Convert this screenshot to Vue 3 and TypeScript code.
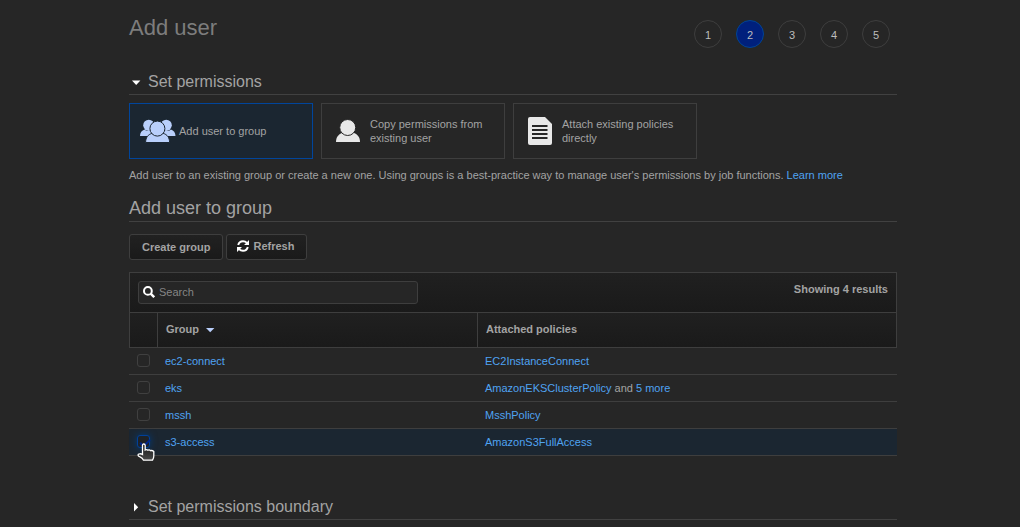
<script setup lang="ts">
import { ref } from 'vue'

interface Policy {
  name: string
  more?: string
}
interface Group {
  name: string
  policy: Policy
}

const steps: number[] = [1, 2, 3, 4, 5]
const currentStep = 2

const methods = [
  { id: 'group', label: 'Add user to group' },
  { id: 'copy', label: 'Copy permissions from existing user' },
  { id: 'attach', label: 'Attach existing policies directly' },
]
const method = ref('group')

const groups: Group[] = [
  { name: 'ec2-connect', policy: { name: 'EC2InstanceConnect' } },
  { name: 'eks', policy: { name: 'AmazonEKSClusterPolicy', more: '5 more' } },
  { name: 'mssh', policy: { name: 'MsshPolicy' } },
  { name: 's3-access', policy: { name: 'AmazonS3FullAccess' } },
]
const selected = ref<string[]>(['s3-access'])
const search = ref('')
</script>

<template>
  <main class="page">
    <header class="top">
      <h1>Add user</h1>
      <ol class="steps">
        <li v-for="n in steps" :key="n" :class="{ current: n === currentStep }">{{ n }}</li>
      </ol>
    </header>

    <h2 class="section">
      <button type="button" aria-expanded="true">
        <svg width="12" height="12" viewBox="0 0 12 12"><path d="M2 4.5h8.400L6.200 9z" fill="#fff" /></svg>
        Set permissions
      </button>
    </h2>

    <div class="methods">
      <button
        v-for="m in methods"
        :key="m.id"
        type="button"
        class="method"
        :class="[m.id, { active: method === m.id }]"
        :aria-pressed="method === m.id"
        @click="method = m.id"
      >
        <svg v-if="m.id === 'group'" width="36" height="24" viewBox="0 0 36 24">
          <g fill="#b9cffb">
            <circle cx="8.800" cy="6.300" r="5.600" />
            <circle cx="26.200" cy="6.300" r="5.600" />
            <path d="M0 17c0-3.500 1.800-5.700 4.600-6.600 2 2 5.400 2.300 7.400.6L15 17z" />
            <path d="M35.500 17c0-3.500-1.800-5.700-4.600-6.600-2 2-5.400 2.300-7.400.6L20.500 17z" />
          </g>
          <g fill="#b9cffb" stroke="#1b2631" stroke-width="1">
            <path d="M5.600 23.500c0-5 2.500-8 6.500-9.200h11c4 1.200 6.500 4.200 6.500 9.200z" />
            <circle cx="17.400" cy="9.600" r="7.500" />
          </g>
        </svg>
        <svg v-else-if="m.id === 'copy'" width="24" height="24" viewBox="0 0 24 24">
          <path d="M0 23c0-5 2.500-7.500 6-9h12c3.500 1.500 6 4 6 9z" fill="#e8e8e8" />
          <circle cx="11.700" cy="8.500" r="8" fill="#e8e8e8" stroke="#262626" stroke-width="1" />
        </svg>
        <svg v-else width="24" height="28" viewBox="0 0 24 28">
          <path d="M2 0h15l7 7v19q0 2-2 2H2q-2 0-2-2V2q0-2 2-2z" fill="#e8e8e8" />
          <path d="M4 9h15.500M4 13h15.500M4 17h15.500M4 21h15.500" stroke="#262626" stroke-width="2" />
        </svg>
        <span>{{ m.label }}</span>
      </button>
    </div>

    <p class="hint">
      Add user to an existing group or create a new one. Using groups is a best-practice way to manage user's
      permissions by job functions. <a href="#">Learn more</a>
    </p>

    <h3>Add user to group</h3>

    <div class="actions">
      <button type="button">Create group</button>
      <button type="button" class="refresh">
        <svg width="12" height="12" viewBox="0 0 12 12" fill="none" stroke="#fff" stroke-width="1.900">
          <path d="M1.200 5C1.800 2.600 3.700 1.200 6 1.200c1.600 0 2.900.6 3.900 1.700M10.800 7c-.6 2.400-2.500 3.800-4.800 3.800-1.600 0-2.900-.6-3.900-1.700" />
          <path d="M12 0v5H7zM0 12V7h5z" fill="#fff" stroke="none" />
        </svg>
        Refresh
      </button>
    </div>

    <div class="toolbar">
      <label class="search">
        <svg width="12" height="12" viewBox="0 0 12 12" fill="none" stroke="#fff">
          <circle cx="4.900" cy="4.900" r="3.900" stroke-width="2" />
          <path d="M7.700 7.700l3.500 3.500" stroke-width="2.400" />
        </svg>
        <input v-model="search" type="text" placeholder="Search" aria-label="Search" />
      </label>
      <strong>Showing 4 results</strong>
    </div>

    <table>
      <colgroup>
        <col class="col-check" />
        <col class="col-group" />
        <col />
      </colgroup>
      <thead>
        <tr>
          <th></th>
          <th>
            Group
            <svg width="10" height="6" viewBox="0 0 10 6"><path d="M1 1h8.400L5.200 5.200z" fill="#b9cffb" /></svg>
          </th>
          <th>Attached policies</th>
        </tr>
      </thead>
      <tbody>
        <tr v-for="g in groups" :key="g.name" :class="{ picked: selected.includes(g.name) }">
          <td>
            <div class="tick">
              <input v-model="selected" type="checkbox" :value="g.name" :aria-label="g.name" />
              <svg v-if="selected.includes(g.name)" class="pointer" width="18" height="19" viewBox="0 0 18 19">
                <defs>
                  <linearGradient id="hand" x1="0" y1="0" x2="0" y2="1">
                    <stop offset="0" stop-color="#161616" />
                    <stop offset="1" stop-color="#484848" />
                  </linearGradient>
                </defs>
                <path
                  d="M5.500 11.500V2.500Q5.500 1 6.800 1T8.200 2.500V7Q9.800 6 11 7.200 12.500 6.500 13.500 7.700 15.200 7 16.800 8.500V13Q16.800 15 15.500 17.200H6.500Q5.500 14.800 3 13.800 1 13.200 1 12T2.500 10.800Q4 10.500 5.500 11.500z"
                  fill="url(#hand)" stroke="#fff" stroke-width="1.300"
                />
              </svg>
            </div>
          </td>
          <td><a href="#">{{ g.name }}</a></td>
          <td>
            <a href="#">{{ g.policy.name }}</a>
            <template v-if="g.policy.more"> and <a href="#">{{ g.policy.more }}</a></template>
          </td>
        </tr>
      </tbody>
    </table>

    <h2 class="section boundary">
      <button type="button" aria-expanded="false">
        <svg width="12" height="12" viewBox="0 0 12 12"><path d="M4 2v8.400L8.200 6.200z" fill="#fff" /></svg>
        Set permissions boundary
      </button>
    </h2>
  </main>
</template>

<style>
body {
  margin: 0;
  background: #262626;
}
</style>

<style scoped>
* {
  box-sizing: border-box;
}
.page {
  padding: 14px 123px 0 129px;
  font-family: 'Liberation Sans', Arial, sans-serif;
  font-size: 11px;
  line-height: 14px;
  color: #a3a3a3;
}
h1,
h2,
h3,
p,
ol {
  margin: 0;
  padding: 0;
  font-weight: normal;
}
button {
  font: inherit;
  color: inherit;
  cursor: pointer;
}
a {
  color: #4fa3f2;
  text-decoration: none;
}
svg {
  display: block;
  flex: none;
}
.top {
  display: flex;
  justify-content: space-between;
  height: 56px;
}
h1 {
  font-size: 22px;
  line-height: 28px;
  color: #7d7d7d;
}
.steps {
  display: flex;
  gap: 14px;
  padding: 6px 7px 0 0;
  list-style: none;
}
.steps li {
  width: 28px;
  height: 28px;
  padding-top: 1px;
  border: 1px solid #3e3e3e;
  border-radius: 50%;
  line-height: 26px;
  text-align: center;
  color: #bdbdbd;
}
.steps .current {
  background: #00207c;
  border-color: #004494;
}
.section {
  border-bottom: 1px solid #414141;
}
.section button {
  display: flex;
  align-items: center;
  gap: 6px;
  padding: 0;
  border: 0;
  background: none;
  font-size: 16px;
  line-height: 24px;
}
.section svg {
  margin-left: 1px;
}
.methods {
  display: flex;
  gap: 8px;
  margin-top: 8px;
}
.method {
  display: flex;
  align-items: center;
  gap: 10px;
  width: 184px;
  height: 56px;
  padding: 0 14px;
  border: 1px solid #3e3e3e;
  background: none;
  text-align: left;
}
.method.group {
  gap: 3px;
  padding: 0 10px;
}
.method.active {
  background: #1b2631;
  border-color: #00459c;
}
.hint {
  margin-top: 8px;
  line-height: 16px;
}
h3 {
  margin-top: 12px;
  border-bottom: 1px solid #414141;
  font-size: 18px;
  line-height: 26px;
}
.actions {
  display: flex;
  gap: 3px;
  margin: 12px 0;
}
.actions button {
  display: flex;
  align-items: center;
  height: 26px;
  padding: 0 12px;
  border: 1px solid #3e3e3e;
  border-radius: 3px;
  background: linear-gradient(#212121, #1a1a1a);
  font-weight: bold;
}
.actions .refresh {
  gap: 4px;
  padding: 0 12px 2px 10px;
}
.toolbar {
  display: flex;
  justify-content: space-between;
  height: 40px;
  padding: 8px;
  border: 1px solid #3e3e3e;
  border-bottom: 0;
  background: linear-gradient(#202020, #1a1a1a);
}
.toolbar strong {
  line-height: 16px;
}
.search {
  display: flex;
  align-items: center;
  gap: 4px;
  width: 280px;
  height: 23px;
  padding: 0 4px 2px;
  border: 1px solid #3e3e3e;
  border-radius: 3px;
  background: #262626;
}
.search input {
  flex: 1;
  min-width: 0;
  padding: 0;
  border: 0;
  outline: 0;
  background: none;
  font: inherit;
  color: inherit;
}
.search input::placeholder {
  color: #858585;
  opacity: 1;
}
table {
  width: 100%;
  table-layout: fixed;
  border-spacing: 0;
}
.col-check {
  width: 28px;
}
.col-group {
  width: 320px;
}
th {
  height: 36px;
  padding: 0 8px 3px;
  border: 1px solid #3e3e3e;
  border-right: 0;
  background: linear-gradient(#202020, #1a1a1a);
  text-align: left;
}
th:last-child {
  border-right: 1px solid #3e3e3e;
}
th svg {
  display: inline-block;
  margin-left: 3px;
}
td {
  height: 27px;
  padding: 0 8px 1px;
  border-bottom: 1px solid #3e3e3e;
}
.picked td {
  background: #1b2631;
}
.tick {
  position: relative;
  width: 13px;
  height: 13px;
}
.tick input {
  display: block;
  appearance: none;
  width: 13px;
  height: 13px;
  margin: 0;
  border: 1px solid #404040;
  border-radius: 3px;
}
.tick input:checked {
  border-color: #00409a;
  background: #1e2227;
  box-shadow: 0 0 7px #003c7a;
}
.tick input:checked::before {
  content: '';
  display: block;
  width: 8px;
  height: 4px;
  margin: 3px 0 0 2px;
  border: solid #00268c;
  border-width: 0 0 2px 2px;
  transform: rotate(-45deg);
}
.pointer {
  position: absolute;
  left: 0;
  top: 8px;
}
.boundary {
  margin-top: 39px;
}
</style>
